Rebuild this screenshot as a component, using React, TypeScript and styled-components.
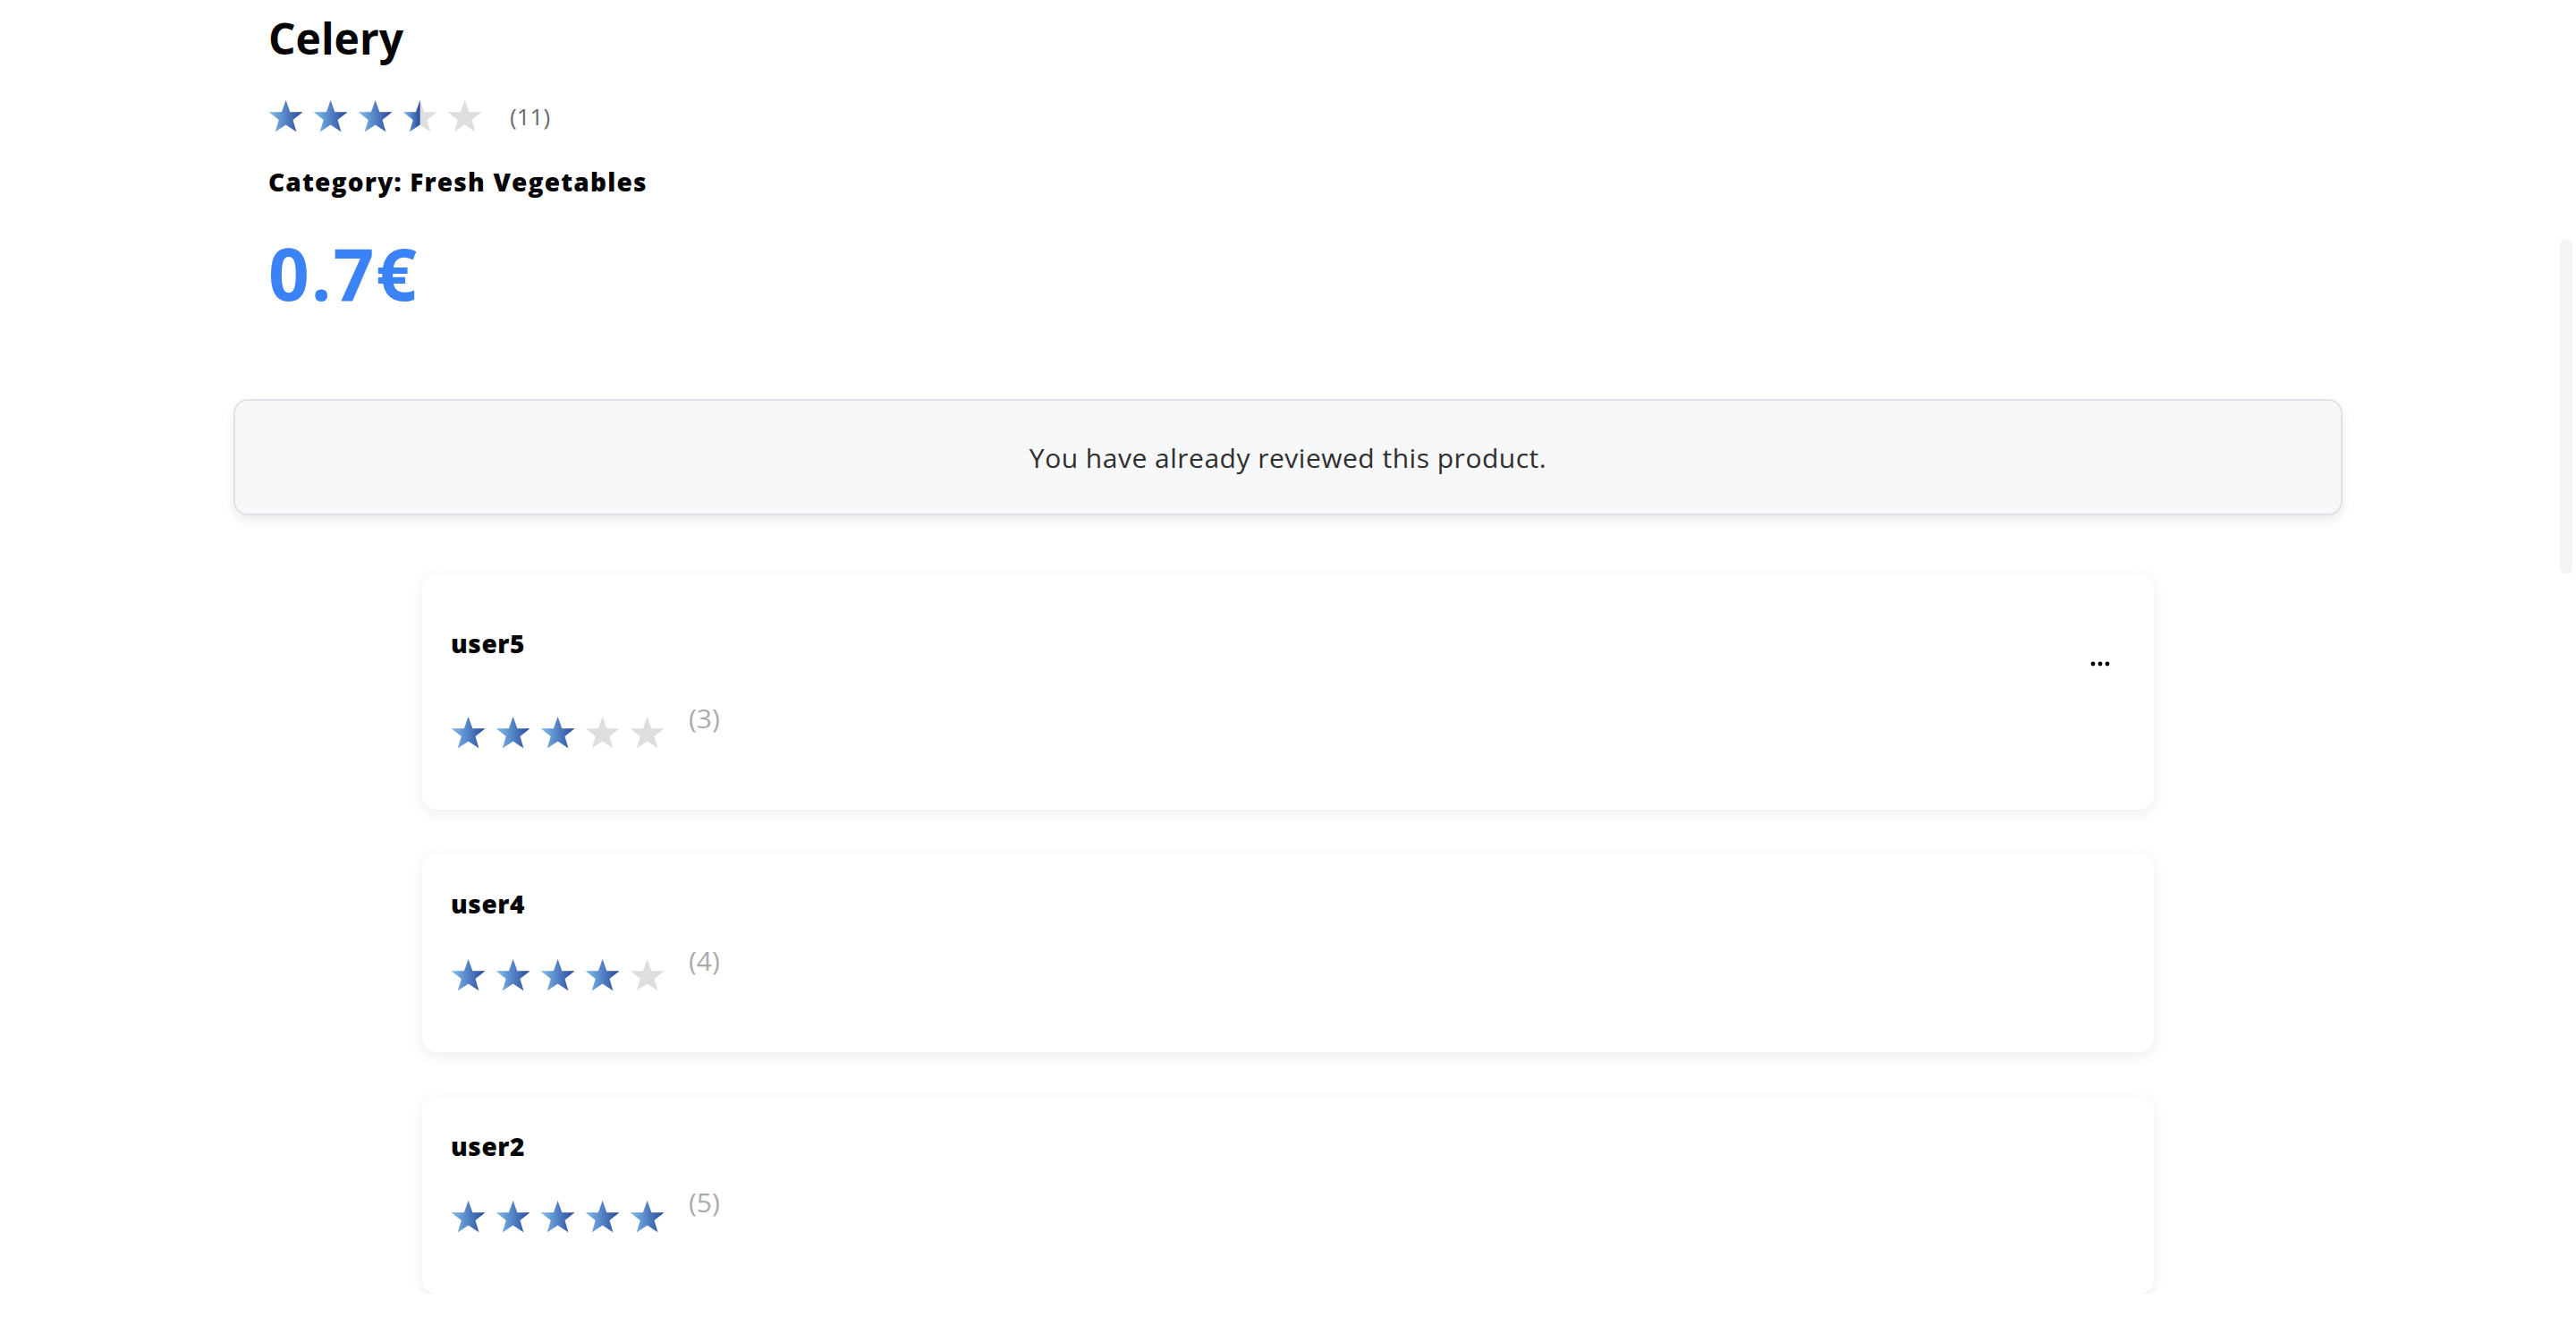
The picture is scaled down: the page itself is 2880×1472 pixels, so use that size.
import React, { useId } from "react";
import styled, { createGlobalStyle } from "styled-components";

const GlobalStyle = createGlobalStyle`
  html, body {
    margin: 0;
    padding: 0;
    background: #ffffff;
    overflow: hidden;
  }
  body {
    font-family: "Open Sans", Lato, Arial, sans-serif;
    color: #000;
  }
  * { box-sizing: border-box; }
`;

const Page = styled.main`
  width: 2880px;
  padding: 14px 261px 0;
`;

const ProductInfo = styled.section`
  padding-left: 39px;
  display: flex;
  flex-direction: column;
  align-items: flex-start;
`;

const Title = styled.h1`
  margin: 0;
  font-size: 48px;
  font-weight: 700;
  line-height: 57.6px;
  color: #050505;
`;

const RatingRow = styled.div<{ $top: number }>`
  display: flex;
  align-items: center;
  margin-top: ${(p) => p.$top}px;
`;

const StarList = styled.div<{ $offset?: number }>`
  display: flex;
  gap: 10px;
  margin-top: ${(p) => p.$offset ?? 0}px;
`;

const TotalCount = styled.span`
  margin-left: 30px;
  font-size: 26px;
  line-height: 1;
  color: #6b6b6b;
`;

const Category = styled.p`
  margin: 37px 0 0;
  font-size: 28px;
  font-weight: 800;
  letter-spacing: 1.2px;
  line-height: 33.6px;
  color: #050505;
`;

const Price = styled.p`
  margin: 37px 0 0;
  font-size: 80px;
  font-weight: 700;
  letter-spacing: 2px;
  line-height: 96px;
  color: #3b82f6;
`;

const Notice = styled.div`
  margin-top: 93px;
  height: 130px;
  display: flex;
  align-items: center;
  justify-content: center;
  background: #f7f8fa;
  border: 2px solid #dfe1e6;
  border-radius: 16px;
  box-shadow: 0 6px 12px rgba(0, 0, 0, 0.08);
  font-size: 30px;
  letter-spacing: 0.5px;
  color: #2f2f2f;
`;

const ReviewList = styled.section`
  margin: 66px 211px 0;
  display: flex;
  flex-direction: column;
  gap: 49px;
`;

const Card = styled.article`
  background: #ffffff;
  border-radius: 16px;
  box-shadow: 0 4px 16px rgba(0, 0, 0, 0.08);
  padding: 40px 32px 66px;
`;

const CardHeader = styled.header`
  display: flex;
  justify-content: space-between;
  align-items: center;
`;

const UserName = styled.h3`
  margin: 0;
  font-size: 28px;
  font-weight: 800;
  letter-spacing: 0.6px;
  line-height: 33.6px;
  color: #050505;
`;

const MenuButton = styled.button`
  width: 56px;
  height: 75px;
  border: none;
  background: transparent;
  display: flex;
  align-items: flex-end;
  justify-content: center;
  padding: 0 0 12px;
  cursor: pointer;
`;

const ReviewRating = styled.div`
  margin-top: 28px;
  display: flex;
  align-items: flex-start;
`;

const ReviewCount = styled.span`
  margin-left: 26px;
  font-size: 30px;
  line-height: 36px;
  color: #ababab;
`;

const ScrollThumb = styled.div`
  position: fixed;
  top: 268px;
  right: 4px;
  width: 14px;
  height: 374px;
  border-radius: 7px;
  background: #f4f4f4;
`;

const STAR_PATH = "m25,1 6,17h18l-14,11 5,17-15-10-15,10 5-17-14-11h18z";

function Star({ fill }: { fill: number }) {
  const uid = useId().replace(/[^a-zA-Z0-9]/g, "");
  const edge = fill >= 1 ? 51 : 1 + 48 * fill;
  const gradEnd = fill >= 1 ? 49 : edge;
  return (
    <svg width={40} height={40} viewBox="0 0 51 48" aria-hidden="true">
      <defs>
        <linearGradient
          id={`g${uid}`}
          gradientUnits="userSpaceOnUse"
          x1="1"
          y1="0"
          x2={gradEnd}
          y2="0"
        >
          <stop offset="0" stopColor="#80bef0" />
          <stop offset="1" stopColor="#27479a" />
        </linearGradient>
        <clipPath id={`c${uid}`}>
          <rect x="0" y="0" width={edge} height="48" />
        </clipPath>
      </defs>
      <path d={STAR_PATH} fill="#dedede" />
      {fill > 0 && (
        <path d={STAR_PATH} fill={`url(#g${uid})`} clipPath={`url(#c${uid})`} />
      )}
    </svg>
  );
}

function Stars({ rating, offset }: { rating: number; offset?: number }) {
  return (
    <StarList $offset={offset}>
      {[0, 1, 2, 3, 4].map((i) => (
        <Star key={i} fill={Math.max(0, Math.min(1, rating - i))} />
      ))}
    </StarList>
  );
}

function Dots() {
  return (
    <svg width={22} height={6} viewBox="0 0 22 6" aria-hidden="true">
      <circle cx="3" cy="3" r="2.4" fill="#000" />
      <circle cx="11" cy="3" r="2.4" fill="#000" />
      <circle cx="19" cy="3" r="2.4" fill="#000" />
    </svg>
  );
}

const reviews = [
  { user: "user5", rating: 3, own: true },
  { user: "user4", rating: 4, own: false },
  { user: "user2", rating: 5, own: false },
];

export default function App() {
  return (
    <>
      <GlobalStyle />
      <Page>
        <ProductInfo>
          <Title>Celery</Title>
          <RatingRow $top={38}>
            <Stars rating={3.5} />
            <TotalCount>(11)</TotalCount>
          </RatingRow>
          <Category>Category: Fresh Vegetables</Category>
          <Price>0.7€</Price>
        </ProductInfo>
        <Notice>You have already reviewed this product.</Notice>
        <ReviewList>
          {reviews.map((r) => (
            <Card key={r.user}>
              <CardHeader>
                <UserName>{r.user}</UserName>
                {r.own && (
                  <MenuButton aria-label="More options">
                    <Dots />
                  </MenuButton>
                )}
              </CardHeader>
              <ReviewRating>
                <Stars rating={r.rating} offset={14} />
                <ReviewCount>({r.rating})</ReviewCount>
              </ReviewRating>
            </Card>
          ))}
        </ReviewList>
      </Page>
      <ScrollThumb />
    </>
  );
}
